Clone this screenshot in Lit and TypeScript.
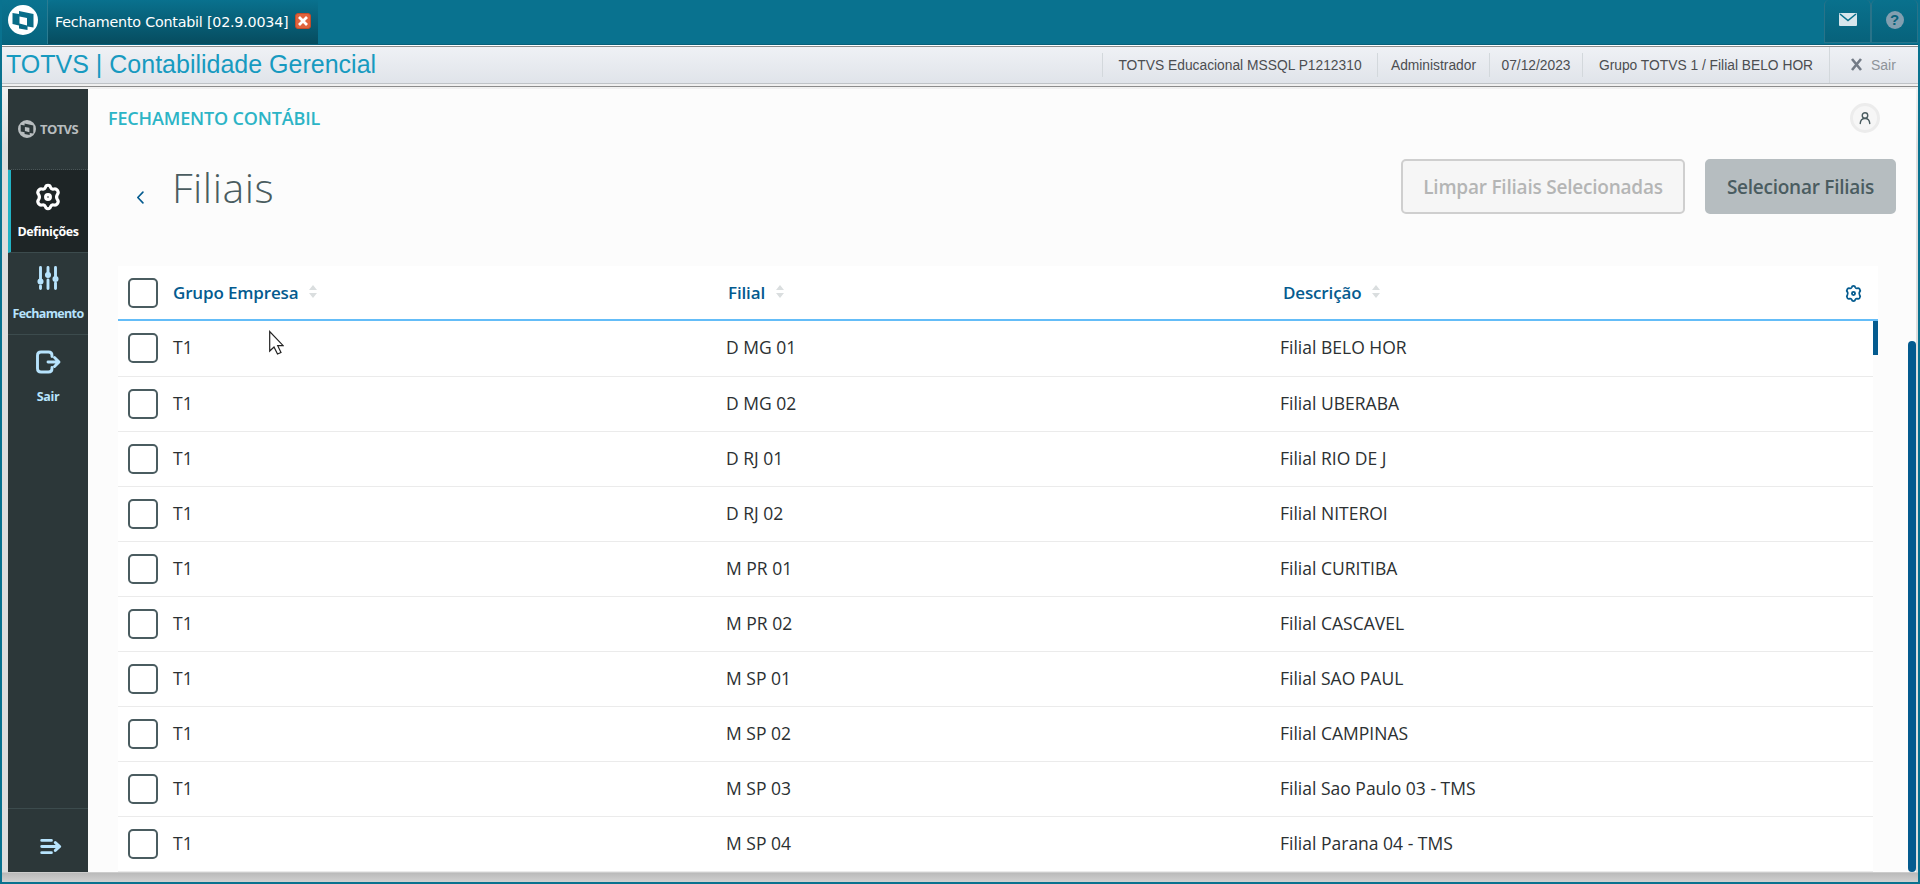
import { LitElement, html, css, svg } from 'lit';
import { customElement, property } from 'lit/decorators.js';

interface Branch {
  group: string;
  branch: string;
  description: string;
}

const BRANCHES: Branch[] = [
  { group: 'T1', branch: 'D MG 01', description: 'Filial BELO HOR' },
  { group: 'T1', branch: 'D MG 02', description: 'Filial UBERABA' },
  { group: 'T1', branch: 'D RJ 01', description: 'Filial RIO DE J' },
  { group: 'T1', branch: 'D RJ 02', description: 'Filial NITEROI' },
  { group: 'T1', branch: 'M PR 01', description: 'Filial CURITIBA' },
  { group: 'T1', branch: 'M PR 02', description: 'Filial CASCAVEL' },
  { group: 'T1', branch: 'M SP 01', description: 'Filial SAO PAUL' },
  { group: 'T1', branch: 'M SP 02', description: 'Filial CAMPINAS' },
  { group: 'T1', branch: 'M SP 03', description: 'Filial Sao Paulo 03 - TMS' },
  { group: 'T1', branch: 'M SP 04', description: 'Filial Parana 04 - TMS' },
];

const GEAR =
  'M9.6 3.2 Q10 1.2 12 1.2 Q14 1.2 14.4 3.2 Q15.2 5.2 17.2 4.7 Q19.2 3.9 20.6 5.7 Q22.2 8 20.7 9.6 Q19.1 12 20.7 14.4 Q22.2 16 20.6 18.3 Q19.2 20.1 17.2 19.3 Q15.2 18.8 14.4 20.8 Q14 22.8 12 22.8 Q10 22.8 9.6 20.8 Q8.8 18.8 6.8 19.3 Q4.8 20.1 3.4 18.3 Q1.8 16 3.3 14.4 Q4.9 12 3.3 9.6 Q1.8 8 3.4 5.7 Q4.8 3.9 6.8 4.7 Q8.8 5.2 9.6 3.2 Z';

const ICONS = {
  gear: svg`<path d=${GEAR} /><circle cx="12" cy="12" r="2.2" />`,
  sliders: svg`
    <path d="M4.5 1.5v13M4.5 20v2.5M12 1.5v6M12 14v8.5M19.5 1.5v10M19.5 17v5.5" />
    <circle cx="4.5" cy="15.5" r="1.6" /><circle cx="12" cy="9" r="1.6" /><circle cx="19.5" cy="13" r="1.6" />`,
  exit: svg`
    <path d="M16 6.5V5.5Q16 2 12.5 2H5Q1.5 2 1.5 5.5V18.5Q1.5 22 5 22H12.5Q16 22 16 18.5V17.5" />
    <path d="M12 12H22.5M18.5 7.5L23 12L18.5 16.5" />`,
  expand: svg`<path d="M2 5H13M2 12H22M2 19H13M17.5 7.5L22.5 12L17.5 16.5" />`,
  back: svg`<path d="M16.5 2L7 12L16.5 22" />`,
  user: svg`<circle cx="12" cy="7" r="5.5" /><path d="M2.5 23Q3 13 12 13Q21 13 21.5 23" />`,
};

@customElement('line-icon')
export class LineIcon extends LitElement {
  @property() name: keyof typeof ICONS = 'gear';

  static styles = css`
    :host {
      display: inline-flex;
      width: 24px;
      height: 24px;
    }
    svg {
      width: 100%;
      height: 100%;
      overflow: visible;
      fill: none;
      stroke: currentColor;
      stroke-width: var(--icon-stroke, 2.9);
      stroke-linecap: round;
      stroke-linejoin: round;
    }
  `;

  render() {
    return html`<svg viewBox="0 0 24 24" aria-hidden="true">${ICONS[this.name]}</svg>`;
  }
}

@customElement('totvs-mark')
export class TotvsMark extends LitElement {
  static styles = css`
    :host {
      display: inline-flex;
    }
    svg {
      width: 100%;
      height: 100%;
      fill: currentColor;
    }
  `;

  // Disc with a stepped opening, and a solid sheet in the middle of it
  render() {
    return html`
      <svg viewBox="0 0 30 30" aria-hidden="true">
        <path
          fill-rule="evenodd"
          d="M15 0A15 15 0 1 1 15 30A15 15 0 1 1 15 0ZM4.5 8L11 9V6L25.5 9V22.5L19.5 21.5V25L11 23.5V20.5L4.5 19ZM11.5 11.5V18.5L19 20.5V13Z"
        />
      </svg>
    `;
  }
}

@customElement('app-root')
export class AppRoot extends LitElement {
  static styles = css`
    :host {
      display: flex;
      flex-direction: column;
      box-sizing: border-box;
      width: 1920px;
      height: 884px;
      padding: 0 2px 2px;
      overflow: hidden;
      background: #09728f;
      font-family: 'Open Sans', sans-serif;
      position: relative;
    }
    * {
      box-sizing: border-box;
    }
    .titlebar {
      display: flex;
      height: 45px;
      flex: none;
      border-bottom: 1px solid #075f79;
    }
    .home {
      width: 46px;
      padding: 5px 0 0 6px;
      border-right: 1px solid #2b7c92;
      background: linear-gradient(#0a7390, #07647e);
      color: #fff;
    }
    .home totvs-mark {
      width: 30px;
      height: 30px;
    }
    .tab {
      display: flex;
      width: 270px;
      padding: 13px 0 0 7px;
      border-radius: 6px 0 0 0;
      background: linear-gradient(#09718e, #064c5f);
      color: #fff;
      font: 14.3px/18px 'DejaVu Sans', sans-serif;
      letter-spacing: -0.22px;
      white-space: nowrap;
    }
    .close {
      width: 16px;
      height: 16px;
      margin-left: 7px;
      border-radius: 3px;
      background: #df633d;
      border: 1px solid #c34c2a;
    }
    .close svg {
      display: block;
      width: 14px;
      height: 14px;
    }
    .tools {
      display: flex;
      margin-left: auto;
    }
    .tool {
      display: flex;
      align-items: center;
      justify-content: center;
      width: 47px;
      height: 43px;
      padding-bottom: 3px;
      border: 1px solid #297389;
      border-top: 0;
      border-radius: 5px 5px 0 0;
      background: linear-gradient(#09718d, #07627b);
    }
    .help {
      width: 18px;
      height: 18px;
      border-radius: 50%;
      background: #829fb0;
      color: #07627b;
      font: bold 15px/18px 'Liberation Sans', sans-serif;
      text-align: center;
    }
    .appbar {
      display: flex;
      align-items: center;
      height: 42px;
      flex: none;
      border-top: 1px solid #fff;
      border-bottom: 1px solid #8c8c8c;
      padding-bottom: 3px;
      background: linear-gradient(#8c8c8c 1px, #eff1f5 1px, #e0e4ea 37px, #bfc3c7 37px, #bfc3c7 38px, #f0f0f0 38px);
      font-family: 'Liberation Sans', sans-serif;
    }
    .product {
      margin-top: -1px;
      padding-left: 4px;
      color: #179ac0;
      font-size: 25px;
      line-height: 34px;
    }
    .info {
      display: flex;
      height: 24px;
      margin-left: auto;
      color: #4c4e51;
      font-size: 13.8px;
      line-height: 25px;
      white-space: nowrap;
    }
    .info div {
      border-left: 1px solid #d3d8dc;
      text-align: center;
    }
    .database {
      width: 275px;
    }
    .operator {
      width: 112px;
    }
    .today {
      width: 93px;
    }
    .company {
      width: 247px;
    }
    .quit {
      display: flex;
      align-items: center;
      gap: 8px;
      height: 36px;
      width: 89px;
      padding-left: 20px;
      border-left: 1px solid #d3d8dc;
      color: #8e9399;
      font-size: 14px;
    }
    .quit svg {
      width: 13px;
      height: 13px;
    }
    .frame {
      display: flex;
      flex: 1;
      min-height: 0;
      padding: 2px 2px 10px 6px;
      background: linear-gradient(#f1f1f1, #dedede 60px, #dedede 785px, #bababa 786px, #d0d0d0);
    }
    .menu {
      display: flex;
      flex-direction: column;
      width: 80px;
      background: #2c3739;
      color: #b7e3fd;
      font-weight: 700;
      font-size: 12.5px;
    }
    .brand {
      display: flex;
      align-items: center;
      gap: 4px;
      height: 81px;
      padding: 0 0 1px 10px;
      border-bottom: 1px dotted #4a5557;
      color: #b8bdbf;
      font-size: 13px;
      letter-spacing: -0.6px;
    }
    .brand totvs-mark {
      width: 18px;
      height: 18px;
    }
    .item {
      display: flex;
      flex-direction: column;
      align-items: center;
      height: 83px;
      padding-top: 14px;
      border-bottom: 1px solid #3c4b4d;
      line-height: 18px;
      letter-spacing: -0.65px;
    }
    .item line-icon {
      margin-bottom: 14px;
    }
    .item.active {
      padding-right: 3px;
      border-left: 3px solid #22b3c5;
      background: #1e2526;
      color: #fff;
      letter-spacing: -0.4px;
    }
    .item.active line-icon {
      width: 26px;
      height: 26px;
      margin-bottom: 13px;
    }
    .item.middle {
      height: 82px;
      padding-top: 13px;
      margin-bottom: 1px;
    }
    .item.middle line-icon {
      margin-bottom: 15px;
    }
    .item.plain {
      border: 0;
      letter-spacing: -0.4px;
    }
    .toggle {
      display: flex;
      justify-content: center;
      height: 64px;
      margin-top: auto;
      padding: 27px 0 0 4px;
      border-top: 1px solid #3c4b4d;
    }
    .toggle line-icon {
      width: 21px;
      height: 21px;
      --icon-stroke: 3.4;
    }
    .page {
      flex: 1;
      min-width: 0;
      display: flex;
      flex-direction: column;
      background: #fcfcfc;
    }
    .module {
      display: flex;
      justify-content: space-between;
      height: 59px;
      padding: 14px 36px 0 20px;
      color: #2cb4c6;
      font-size: 18px;
      font-weight: 600;
      line-height: 31px;
      letter-spacing: -0.15px;
    }
    .avatar {
      display: flex;
      align-items: center;
      justify-content: center;
      width: 30px;
      height: 30px;
      border: 3px solid #ececec;
      border-radius: 50%;
      background: #f6f6f6;
      color: #4a5c60;
    }
    .avatar line-icon {
      width: 12px;
      height: 12px;
      --icon-stroke: 2.8;
    }
    .heading {
      display: flex;
      height: 118px;
      padding: 11px 20px 0 46px;
    }
    .heading line-icon {
      width: 13px;
      height: 13px;
      margin-top: 32px;
      color: #045b8f;
      --icon-stroke: 3;
    }
    .title {
      margin: -2px auto 0 25px;
      color: #4a5c60;
      font-size: 41px;
      font-weight: 300;
      line-height: 60px;
      letter-spacing: 0.5px;
    }
    .action {
      height: 55px;
      padding: 0;
      border: 2px solid #cfcfcf;
      border-radius: 5px;
      background: #f6f6f6;
      color: #b4b5b5;
      font: 600 19px 'Open Sans', sans-serif;
      white-space: nowrap;
    }
    .clear {
      width: 284px;
      letter-spacing: -0.22px;
    }
    .select {
      width: 191px;
      margin-left: 20px;
      border-color: #b6bdc0;
      background: #b6bdc0;
      color: #4a5c60;
      letter-spacing: -0.26px;
    }
    .body {
      position: relative;
      flex: 1;
      min-height: 0;
      padding: 0 38px 0 30px;
      overflow: hidden;
    }
    .head,
    .row {
      display: grid;
      grid-template-columns: 55px 553px 554px 1fr;
      align-items: center;
      background: #fff;
    }
    .head {
      height: 55px;
      padding-top: 1px;
      border-bottom: 2px solid #64bdf8;
      color: #045b8f;
      font-size: 17px;
      font-weight: 600;
    }
    .name {
      display: flex;
      align-items: center;
      gap: 11px;
      padding-bottom: 2px;
      letter-spacing: -0.15px;
    }
    .name.second {
      padding-left: 2px;
    }
    .name.third {
      padding-left: 3px;
    }
    .sort {
      width: 8px;
      height: 13px;
      margin-top: -2px;
      fill: #dadedf;
    }
    .columns {
      width: 17px;
      height: 17px;
      margin-left: auto;
      margin-right: 16px;
      --icon-stroke: 2.6;
    }
    .last {
      display: flex;
      align-items: center;
    }
    .row {
      height: 55px;
      margin-right: 5px;
      border-bottom: 1px solid #ebebeb;
      color: #2b3032;
      font-size: 17.5px;
      line-height: 24px;
    }
    .row span {
      padding-bottom: 2px;
    }
    .head + .row {
      height: 56px;
      padding-bottom: 1px;
    }
    .box {
      width: 30px;
      height: 30px;
      margin-left: 10px;
      border: 2px solid #4a5c60;
      border-radius: 5px;
      background: #fff;
    }
    .list-thumb {
      position: absolute;
      top: 55px;
      right: 38px;
      width: 5px;
      height: 34px;
      background: #045b8f;
    }
    .page-thumb {
      position: absolute;
      top: 75px;
      right: 0;
      bottom: 0;
      width: 8px;
      border-radius: 4px;
      background: #045b8f;
    }
    .cursor {
      position: absolute;
      left: 269px;
      top: 330px;
      width: 15px;
      height: 26px;
    }
  `;

  private renderColumn(label: string, position: string) {
    return html`
      <div class="name ${position}">
        <span>${label}</span>
        <svg class="sort" viewBox="0 0 8 13"><path d="M4 0L8 5H0ZM4 13L0 8H8Z" /></svg>
      </div>
    `;
  }

  private renderRow(item: Branch) {
    return html`
      <div class="row">
        <div class="box" role="checkbox" aria-checked="false"></div>
        <span>${item.group}</span>
        <span>${item.branch}</span>
        <span>${item.description}</span>
      </div>
    `;
  }

  render() {
    return html`
      <header class="titlebar">
        <div class="home"><totvs-mark></totvs-mark></div>
        <div class="tab">
          <span>Fechamento Contabil [02.9.0034]</span>
          <div class="close">
            <svg viewBox="0 0 14 14"><path d="M3 3L11 11M11 3L3 11" stroke="#fff" stroke-width="2.8" /></svg>
          </div>
        </div>
        <div class="tools">
          <div class="tool">
            <svg width="18" height="13" viewBox="0 0 18 13">
              <rect width="18" height="13" rx="1" fill="#d7e6ec" />
              <path d="M1 1L9 7.5L17 1" fill="none" stroke="#07708c" stroke-width="1.6" />
            </svg>
          </div>
          <div class="tool"><div class="help">?</div></div>
        </div>
      </header>
      <div class="appbar">
        <span class="product">TOTVS | Contabilidade Gerencial</span>
        <div class="info">
          <div class="database">TOTVS Educacional MSSQL P1212310</div>
          <div class="operator">Administrador</div>
          <div class="today">07/12/2023</div>
          <div class="company">Grupo TOTVS 1 / Filial BELO HOR</div>
        </div>
        <div class="quit">
          <svg viewBox="0 0 13 13"><path d="M2 1L11 12M11 1L2 12" stroke="#737b86" stroke-width="2.6" /></svg>
          <span>Sair</span>
        </div>
      </div>
      <div class="frame">
        <nav class="menu">
          <div class="brand"><totvs-mark></totvs-mark><span>TOTVS</span></div>
          <div class="item active"><line-icon name="gear"></line-icon><span>Definições</span></div>
          <div class="item middle"><line-icon name="sliders"></line-icon><span>Fechamento</span></div>
          <div class="item plain"><line-icon name="exit"></line-icon><span>Sair</span></div>
          <div class="toggle"><line-icon name="expand"></line-icon></div>
        </nav>
        <main class="page">
          <div class="module">
            <span>FECHAMENTO CONTÁBIL</span>
            <div class="avatar"><line-icon name="user"></line-icon></div>
          </div>
          <div class="heading">
            <line-icon name="back"></line-icon>
            <h1 class="title">Filiais</h1>
            <button class="action clear">Limpar Filiais Selecionadas</button>
            <button class="action select">Selecionar Filiais</button>
          </div>
          <div class="body">
            <div class="head">
              <div class="box" role="checkbox" aria-checked="false"></div>
              ${this.renderColumn('Grupo Empresa', 'first')} ${this.renderColumn('Filial', 'second')}
              <div class="last">
                ${this.renderColumn('Descrição', 'third')}
                <line-icon class="columns" name="gear"></line-icon>
              </div>
            </div>
            ${BRANCHES.map((item) => this.renderRow(item))}
            <div class="list-thumb"></div>
            <div class="page-thumb"></div>
          </div>
        </main>
      </div>
      <svg class="cursor" viewBox="0 0 15 26">
        <path d="M.7 1.5V21L5 17L8.5 24L12 22.5L8.7 15.7H14.2Z" fill="#fff" stroke="#222" stroke-width="1.2" />
      </svg>
    `;
  }
}
